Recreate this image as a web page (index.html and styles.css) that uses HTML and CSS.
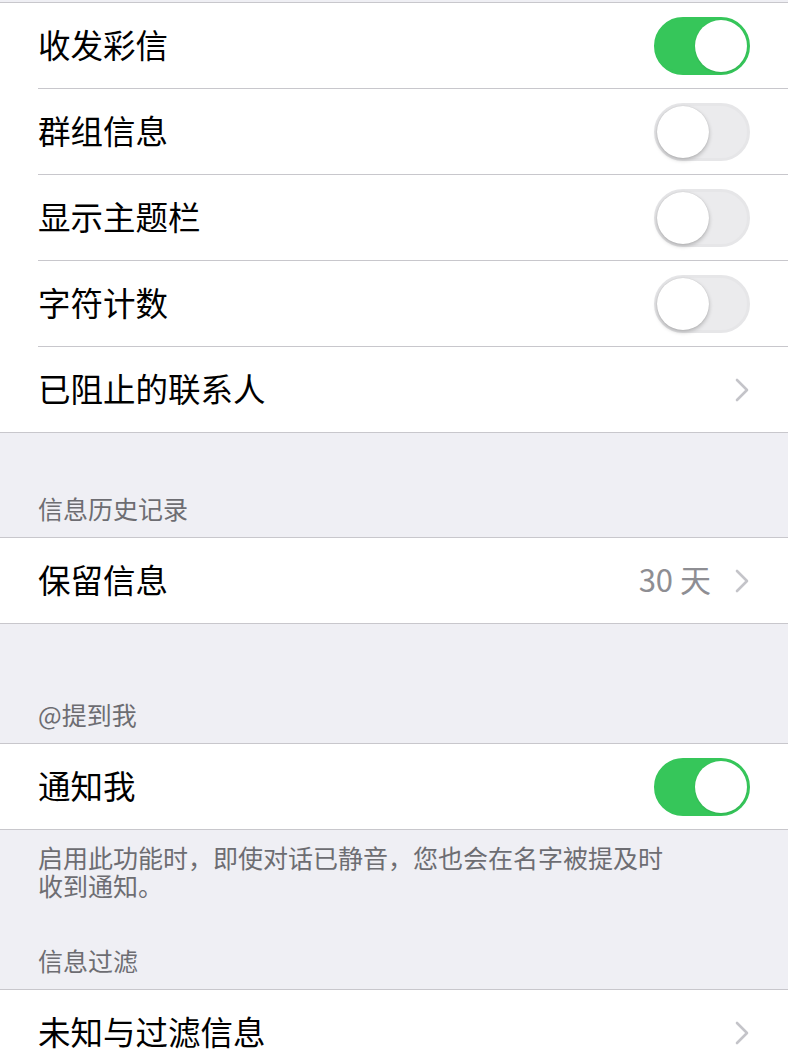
FILE: index.html
```html
<!DOCTYPE html>
<html lang="zh-CN">
<head>
<meta charset="utf-8">
<link rel="stylesheet" href="styles.css">
</head>
<body>
<div class="group">
  <div class="row"><span class="label">收发彩信</span><span class="switch on"><span class="knob"></span></span></div>
  <div class="row"><span class="label">群组信息</span><span class="switch"><span class="knob"></span></span></div>
  <div class="row"><span class="label">显示主题栏</span><span class="switch"><span class="knob"></span></span></div>
  <div class="row"><span class="label">字符计数</span><span class="switch"><span class="knob"></span></span></div>
  <div class="row last"><span class="label">已阻止的联系人</span><svg class="chev" width="14" height="24" viewBox="0 0 14 24"><polyline points="2,2 12,12 2,22" fill="none" stroke="#c4c4c9" stroke-width="2.6" stroke-linecap="round" stroke-linejoin="round"/></svg></div>
</div>
<div class="header h1">信息历史记录</div>
<div class="group">
  <div class="row last"><span class="label">保留信息</span><span class="value">30 天</span><svg class="chev" width="14" height="24" viewBox="0 0 14 24"><polyline points="2,2 12,12 2,22" fill="none" stroke="#c4c4c9" stroke-width="2.6" stroke-linecap="round" stroke-linejoin="round"/></svg></div>
</div>
<div class="header h2">@提到我</div>
<div class="group">
  <div class="row last"><span class="label">通知我</span><span class="switch on"><span class="knob"></span></span></div>
</div>
<div class="footer">启用此功能时，即使对话已静音，您也会在名字被提及时<br>收到通知。</div>
<div class="header h3">信息过滤</div>
<div class="group">
  <div class="row last"><span class="label">未知与过滤信息</span><svg class="chev" width="14" height="24" viewBox="0 0 14 24"><polyline points="2,2 12,12 2,22" fill="none" stroke="#c4c4c9" stroke-width="2.6" stroke-linecap="round" stroke-linejoin="round"/></svg></div>
</div>
</body>
</html>
```
FILE: styles.css
```css
html, body {
  margin: 0;
  padding: 0;
}
body {
  background: #efeff4;
  padding-top: 2px;
  font-family: "Noto Sans CJK SC", "Noto Sans", sans-serif;
  width: 788px;
  overflow: hidden;
}
.group {
  background: #fff;
  border-top: 1px solid #c8c7cc;
  border-bottom: 1px solid #c8c7cc;
}
.row {
  margin-left: 38px;
  height: 85px;
  border-bottom: 1px solid #c8c7cc;
  display: flex;
  align-items: center;
  padding-right: 38px;
}
.row.last {
  border-bottom: none;
}
.label {
  flex: 1;
  font-size: 32.5px;
  color: #000;
  line-height: 40px;
  padding-bottom: 4px;
}
.value {
  font-size: 31px;
  color: #8e8e93;
  margin-right: 24px;
  line-height: 40px;
  padding-bottom: 4px;
}
.chev {
  display: block;
  margin-right: 1px;
}
.switch {
  position: relative;
  width: 96px;
  height: 58px;
  border-radius: 29px;
  box-sizing: border-box;
  border: 3px solid #e6e6e8;
  background: #ebebed;
}
.switch.on {
  background: #36c65a;
  border-color: #36c65a;
}
.knob {
  position: absolute;
  top: 0;
  left: 0;
  width: 52px;
  height: 52px;
  border-radius: 50%;
  background: #fff;
  box-shadow: 0 2px 4px rgba(0,0,0,0.25), 0 0 1px rgba(0,0,0,0.15);
}
.switch.on .knob {
  left: auto;
  right: 0;
  box-shadow: 0 1px 2px rgba(0,0,0,0.1);
}
.header {
  box-sizing: border-box;
  display: flex;
  align-items: flex-end;
  padding: 0 38px 14px;
  font-size: 25px;
  line-height: 30px;
  color: #6d6d72;
}
.h1 { height: 104px; }
.h2 { height: 119px; }
.h3 { height: 88px; }
.footer {
  padding: 13px 38px 2px;
  font-size: 25px;
  line-height: 28px;
  color: #6d6d72;
}
```
